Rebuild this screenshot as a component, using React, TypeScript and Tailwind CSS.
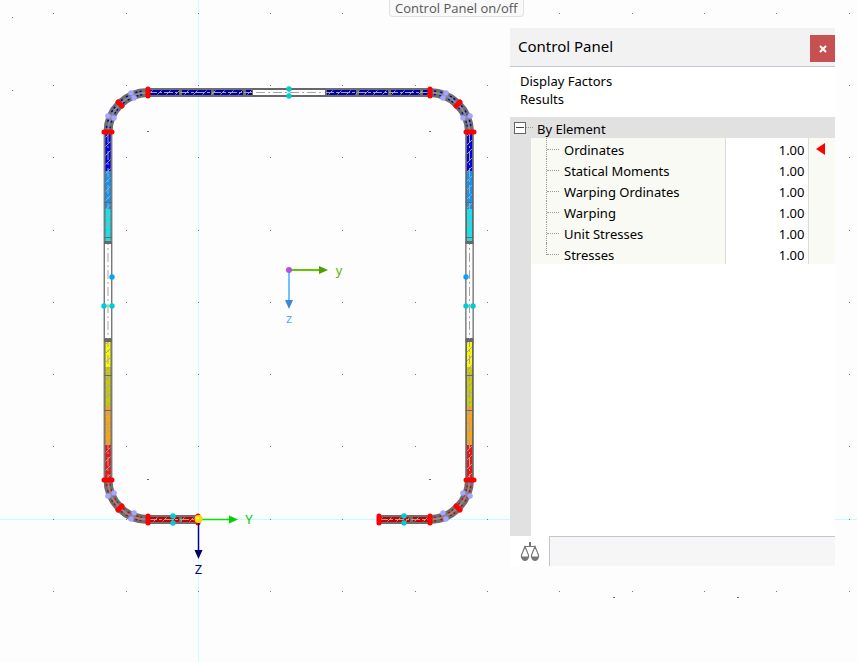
import type { ReactNode } from "react";

const factors = [
  "Ordinates",
  "Statical Moments",
  "Warping Ordinates",
  "Warping",
  "Unit Stresses",
  "Stresses",
];

const gridX = [53, 126, 198, 270, 342, 415, 487, 559, 632, 704, 776, 849];
const gridY = [13, 85, 157, 230, 302, 374, 446, 519, 591];

// Fill bands along the two webs, top to bottom: [start, end, colour]
const bands: [number, number, string][] = [
  [132, 171, "#0000f0"],
  [171, 209, "#0a96ff"],
  [209, 242, "#00eaf5"],
  [341, 367, "#fafa00"],
  [367, 406, "#c8cc00"],
  [406, 445, "#ffa50a"],
  [445, 480, "#f01414"],
];

function Web({ x }: { x: number }) {
  return (
    <g>
      <rect x={x - 4} y="132" width="8" height="348" fill="#686868" />
      <path d={`M${x - 4} 132V480M${x + 4} 132V480`} stroke="#8a8a8a" />
      <rect x={x - 3} y="244" width="6" height="94" fill="#fff" />
      {bands.map(([from, to, fill]) => (
        <g key={from}>
          <rect x={x - 2.5} y={from} width="5" height={to - from} fill={fill} />
          <rect x={x - 2.5} y={from} width="5" height={to - from} fill="url(#hatch)" />
        </g>
      ))}
      <path d={`M${x} 134V480`} stroke="#a5a5a5" strokeDasharray="9 3 2 3" />
      {[202, 237, 242, 340, 375, 410].map((y) => (
        <path key={y} d={`M${x - 4} ${y}.5h8`} stroke="#686868" strokeWidth={y === 340 || y === 242 ? 3 : 1} />
      ))}
    </g>
  );
}

function Strip({ x1, x2, y, color }: { x1: number; x2: number; y: number; color: string }) {
  return (
    <g>
      <path d={`M${x1} ${y}H${x2}`} stroke="#6e6e6e" strokeWidth="9" />
      <path d={`M${x1 + 2} ${y}H${x2}`} stroke={color} strokeWidth="5" strokeDasharray="29 3" />
      <path d={`M${x1} ${y}H${x2}`} stroke="#a5a5a5" strokeDasharray="9 2 3 2" />
      <rect x={x1} y={y - 2} width={x2 - x1} height="4" fill="url(#hatch)" />
    </g>
  );
}

function Corner({ d, color }: { d: string; color: string }) {
  return (
    <g fill="none">
      <path d={d} stroke="#6e6e6e" strokeWidth="9" />
      <path d={d} stroke={color} strokeWidth="5" strokeDasharray="2 2 2 4" />
      <path d={d} stroke="#8c8c8c" strokeWidth="2" />
    </g>
  );
}

function SectionView() {
  return (
    <svg className="absolute inset-0 h-full w-full" aria-label="Cross-section">
      <defs>
        <pattern id="hatch" width="9" height="9" patternUnits="userSpaceOnUse">
          <path d="M0 9L9 0" stroke="#a5a5a5" fill="none" />
        </pattern>
      </defs>

      <line x1="198.5" y1="0" x2="198.5" y2="100%" stroke="#c8ffff" />
      <line x1="0" y1="519.5" x2="100%" y2="519.5" stroke="#c0ffff" />
      {gridY.map((y) => gridX.map((x) => (
        <rect key={`${x}-${y}`} x={x} y={y} width="1" height="1" fill="#777" />
      )))}
      {[[147, 131], [429, 131], [147, 479], [429, 479], [613, 597], [737, 597]].map(([x, y]) => (
        <rect key={`${x}-${y}`} x={x} y={y} width="2" height="1" fill="#666" />
      ))}
      <rect x="12" y="17" width="1" height="1" fill="#777" />
      <rect x="12" y="90" width="1" height="1" fill="#777" />

      {/* Profile */}
      <Web x={108} />
      <Web x={469.5} />
      <Strip x1={148} x2={252} y={92.5} color="#0000aa" />
      <Strip x1={325} x2={430} y={92.5} color="#0000aa" />
      <path d="M252 89H326M252 96H326" stroke="#686868" strokeWidth="2" />
      <rect x="253" y="90" width="72" height="5" fill="#fff" />
      <path d="M252.5 88V97M325.5 88V97" stroke="#686868" />
      <path d="M256 92.5H324" stroke="#a5a5a5" strokeDasharray="9 3 2 3" />
      <Strip x1={148} x2={198} y={519.5} color="#c80000" />
      <Strip x1={379} x2={430} y={519.5} color="#c80000" />
      <Corner d="M108 132A40 40 0 0 1 148 92.5" color="#0000aa" />
      <Corner d="M430 92.5A40 40 0 0 1 469.5 132" color="#0000aa" />
      <Corner d="M108 480A40 40 0 0 0 148 519.5" color="#c80000" />
      <Corner d="M430 519.5A40 40 0 0 0 469.5 480" color="#c80000" />

      {/* Element boundaries */}
      <path
        d="M148 89V96M430 89V96M148 516V523M430 516V523M379 516V523M198 516V523M104 132H112M466 132H474M104 480H112M466 480H474M118 102L122 106M460 102L456 106M118 510L122 506M460 510L456 506"
        stroke="#f00"
        strokeWidth="5"
        strokeLinecap="round"
      />
      <g fill="#a5a5ff">
        {[[131, 93], [134, 98], [108, 116], [114, 118], [446, 93], [443, 98], [470, 116], [463, 118], [108, 496], [114, 493], [131, 519], [134, 513], [470, 496], [463, 493], [446, 519], [443, 513]].map(([x, y]) => (
          <circle key={`${x}-${y}`} cx={x} cy={y} r="2.8" />
        ))}
      </g>
      <path d="M289 89V96M104 306H112M466 306H473" stroke="#8cc8c8" />
      <g fill="#00cdcd">
        {[[289, 89], [289, 96], [104, 306], [112, 306], [466, 306], [473, 306], [173, 516], [173, 523], [404, 516], [404, 523]].map(([x, y]) => (
          <circle key={`${x}-${y}`} cx={x} cy={y} r="2.7" />
        ))}
      </g>
      <circle cx="112" cy="277" r="2.7" fill="#0aa0ff" />
      <circle cx="466" cy="277" r="2.7" fill="#0aa0ff" />

      {/* Principal and global axes */}
      <g fontFamily="Noto Sans, sans-serif" fontSize="13" textAnchor="middle">
        <path d="M289 270H320" stroke="#5fc800" strokeWidth="2" />
        <path d="M319 266L328 270L319 274Z" fill="#4ba000" />
        <path d="M289 270V301" stroke="#6ec3ff" strokeWidth="2" />
        <path d="M285 300H293L289 309Z" fill="#3c87d7" />
        <circle cx="289" cy="270" r="3" fill="#b450e6" />
        <text x="339" y="275" fill="#5ab400">y</text>
        <text x="289" y="323" fill="#5aaaff">z</text>
        <path d="M198 519.5H230" stroke="#00e600" strokeWidth="1.5" />
        <path d="M229 515.5L238 519.5L229 523.5Z" fill="#00d200" />
        <path d="M198.5 519V551" stroke="#0000a0" strokeWidth="1.5" />
        <path d="M194.5 550H202.5L198.5 559Z" fill="#000064" />
        <circle cx="198.5" cy="519" r="4" fill="#f5dc00" />
        <circle cx="197.5" cy="518" r="1.5" fill="#fff050" />
        <text x="249" y="524" fill="#00c800">Y</text>
        <text x="198.5" y="574" fill="#000082">Z</text>
      </g>
    </svg>
  );
}

function BalanceIcon() {
  return (
    <svg className="h-5 w-5" viewBox="0 0 20 20" fill="none" stroke="#777">
      <path d="M10 0V5" strokeWidth="2" />
      <path d="M4.5 4.5H15.5" />
      <path d="M5 4.5L1.5 13V15H8.5V13ZM15 4.5L11.5 13V15H18.5V13Z" strokeWidth="1.2" />
      <path d="M1 15H9Q8 19 5 19T1 15ZM11 15H19Q18 19 15 19T11 15Z" fill="#777" stroke="none" />
    </svg>
  );
}

function TreeCell({ last, children }: { last: boolean; children: ReactNode }) {
  return (
    <th scope="row" className="border-r border-[#dcdcdc] bg-[#f9faf3] p-0 text-left font-normal">
      <div className="flex h-[21px] pl-[15px]">
        <span className={last ? "h-3 w-[13px] border-l border-dotted border-[#999]" : "h-full w-[13px] border-l border-dotted border-[#999]"}>
          <span className="block h-3 border-b border-dotted border-[#999]" />
        </span>
        <span className="pt-[2px] pl-[5px]">{children}</span>
      </div>
    </th>
  );
}

function ControlPanel() {
  return (
    <section className="absolute top-[28px] right-[22px] flex w-[325px] flex-col bg-white">
      <header className="flex h-[39px] items-end justify-between border-b border-[#c5c5d2] bg-[#f2f2f2] pb-1 pl-2">
        <h1 className="pb-[6px] text-[15px] leading-5">Control Panel</h1>
        <button type="button" aria-label="Close" className="flex h-[27px] w-[25px] items-center justify-center bg-[#c75050]">
          <svg className="h-2 w-2" viewBox="0 0 8 8" fill="none" stroke="#fff" strokeWidth="2">
            <path d="M1 1L7 7M7 1L1 7" />
          </svg>
        </button>
      </header>

      <div className="h-[50px] px-[10px] pt-[5px] text-[13px] leading-[18px]">
        <p>Display Factors</p>
        <p>Results</p>
      </div>

      <div className="flex h-[21px] items-center bg-[#e1e1e1] pl-1 text-[13px]">
        <button type="button" aria-label="Collapse By Element" className="flex h-3 w-3 items-center justify-center border border-[#666] bg-white">
          <span className="h-px w-2 bg-[#444]" />
        </button>
        <span className="w-[7px] border-b border-dotted border-[#999]" />
        <h2 className="pt-1 pl-1 leading-[19px]">By Element</h2>
      </div>

      <div className="flex h-[398px] items-start">
        <div className="h-full w-[21px] bg-[#e1e1e1]" />
        <table className="flex-1 border-collapse text-[13px] leading-5">
          <tbody>
            {factors.map((name, i) => (
              <tr key={name}>
                <TreeCell last={i === factors.length - 1}>{name}</TreeCell>
                <td className="w-[83px] border-r border-[#dcdcdc] p-0 pr-[3px] text-right align-top">
                  <div className="h-[21px] pt-[2px]">1.00</div>
                </td>
                <td className="w-[27px] bg-[#f9faf3] p-0">
                  {i === 0 && (
                    <svg className="ml-[7px] h-[12px] w-[10px]" viewBox="0 0 10 12">
                      <path d="M0 6L9 0V12Z" fill="#f00" />
                    </svg>
                  )}
                </td>
              </tr>
            ))}
          </tbody>
        </table>
      </div>

      <footer className="flex h-[30px]">
        <button type="button" aria-label="Display factors" className="flex w-[39px] items-center justify-center pt-[2px]">
          <BalanceIcon />
        </button>
        <div className="flex-1 border-t border-l border-[#c5c5d2] bg-[#f6f6f6]" />
      </footer>
    </section>
  );
}

export default function App() {
  return (
    <main className="relative min-h-screen overflow-hidden bg-[#fdfdfd] font-['Noto_Sans',sans-serif] text-black">
      <SectionView />
      <div role="tooltip" className="absolute top-0 left-[389px] rounded-b border border-t-0 border-[#e2e2e2] bg-[#f9f9f9] px-[5px] font-['Open_Sans',sans-serif] text-[13px] leading-[16px] text-[#575757]">
        Control Panel on/off
      </div>
      <ControlPanel />
    </main>
  );
}
